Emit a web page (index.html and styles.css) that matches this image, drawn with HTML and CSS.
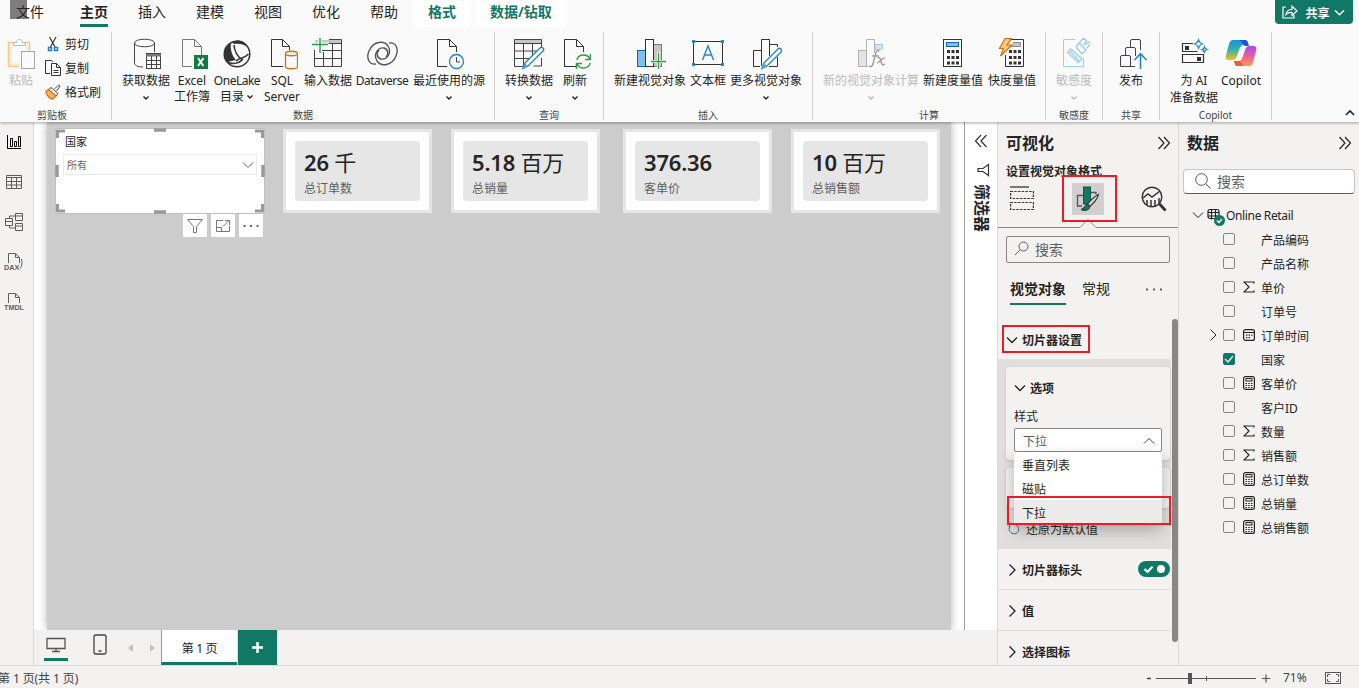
FILE: index.html
```html
<!DOCTYPE html>
<html lang="zh-CN">
<head>
    <title>Power BI 报表</title>
    <meta charset="utf-8">
    <link rel="stylesheet" href="styles.css">
</head>
<body>
    <!-- 公用图标 -->
    <svg class="defs" width="0" height="0">
        <symbol id="i-down" viewBox="0 0 12 12"><path d="M1 3.5l5 5 5-5" fill="none" stroke="currentColor"/></symbol>
        <symbol id="i-right" viewBox="0 0 12 12"><path d="M3.5 0.5L9 6l-5.500 5.500" fill="none" stroke="currentColor"/></symbol>
        <symbol id="i-caret" viewBox="0 0 8 8"><path d="M1.500 2.500L4 5l2.500-2.500" fill="none" stroke="currentColor" stroke-width="1.400"/></symbol>
        <symbol id="i-collapse" viewBox="0 0 14 14"><path d="M1.500 1l5.500 6-5.500 6M7 1l5.500 6L7 13" fill="none" stroke="currentColor" stroke-width="1.200"/></symbol>
        <symbol id="i-sum" viewBox="0 0 12 12"><path d="M11 2.500V1H1l5 5-5 5h10V9.500" fill="none" stroke="currentColor" stroke-width="1.200"/></symbol>
        <symbol id="i-calc" viewBox="0 0 12 14"><rect x=".6" y=".6" width="10.800" height="12.800" rx="2" fill="none" stroke="currentColor" stroke-width="1.200"/><rect x="3" y="2.600" width="6" height="2.400" fill="none" stroke="currentColor"/><path d="M2.500 7.500h7M2.500 9.500h7M2.500 11.500h7" stroke="currentColor" stroke-width="1.200" stroke-dasharray="1.500 1.200"/></symbol>
        <symbol id="i-cal" viewBox="0 0 12 12"><rect x=".6" y=".6" width="10.800" height="10.800" rx="2" fill="none" stroke="currentColor" stroke-width="1.200"/><path d="M1 3.500h10" stroke="currentColor"/><path d="M3 6.200h6.500M3 8.700h4" stroke="currentColor" stroke-width="1.300" stroke-dasharray="1.400 1.200"/></symbol>
    </svg>

    <div class="ribbon">
        <div class="tabs">
            <span class="tab file">文件</span>
            <span class="tab active">主页</span>
            <span class="tab">插入</span>
            <span class="tab">建模</span>
            <span class="tab">视图</span>
            <span class="tab">优化</span>
            <span class="tab">帮助</span>
            <span class="tab context">格式</span>
            <span class="tab context">数据/钻取</span>
            <button class="share">
                <svg width="16" height="14" viewBox="0 0 16 14"><path d="M4 2H1v11h11v-3M4 9.500C4.500 6 7 4.500 10 4.500V1l5 5-5 4.500V7.500C7.500 7.300 5.500 8 4 9.500z" fill="none" stroke="#fff" stroke-width="1.200"/></svg>
                共享
                <svg width="11" height="11"><use href="#i-down" stroke-width="1.500"/></svg>
            </button>
        </div>

        <div class="groups">
            <!-- 剪贴板 -->
            <div class="group clipboard">
                <div class="items">
                    <div class="btn w-28 disabled">
                        <svg width="32" height="32" viewBox="0 0 32 32"><path d="M8 4.500H3.500v24h11M24.500 13V4.500H20" fill="none" stroke="#f3c88f" stroke-width="1.500"/><path d="M5.500 7v19.500h9M22.500 7v5" fill="none" stroke="#fbe6cc" stroke-width="2.500"/><path d="M8.500 7.500V4.500h3c0-4 6-4 6 0h3v3z" fill="#fafafa" stroke="#b9b9b9"/><rect x="16.500" y="13.500" width="13" height="17" fill="#fafafa" stroke="#a5a5a5"/></svg>
                        <span>粘贴</span>
                    </div>
                    <div class="small-btns">
                        <div class="small-btn"><svg width="16" height="16" viewBox="0 0 16 16"><path d="M4.500 1l5.500 10M11 1L5.500 11" fill="none" stroke="#333" stroke-width="1.200"/><rect x="3.500" y="11.500" width="3" height="3" fill="none" stroke="#1e7fc4" stroke-width="1.500"/><rect x="9.500" y="11.500" width="3" height="3" fill="none" stroke="#1e7fc4" stroke-width="1.500"/></svg>剪切</div>
                        <div class="small-btn"><svg width="16" height="16" viewBox="0 0 16 16"><path d="M5 13.500H.5V.5h6l1.500 1.500" fill="none" stroke="#333"/><path d="M6.500 3.500h5l4 4v8h-9zM11.500 3.500v4h4M8.500 10.500h5M8.500 12.500h5" fill="#fafafa" stroke="#333"/></svg>复制</div>
                        <div class="small-btn"><svg width="16" height="16" viewBox="0 0 16 16"><path d="M9.500 5L13 1.500c1-1 2.500.3 1.500 1.500L11.500 7" fill="#fff" stroke="#444"/><path d="M6 3.500l7 6-2 2.500-7.500-6.500z" fill="#fff" stroke="#444"/><path d="M3.500 5.500L.8 7.500c1 4 3.500 7 7 7.700L11 12z" fill="#f7b267" stroke="#d5700f" stroke-width="1.200"/></svg>格式刷</div>
                    </div>
                </div>
                <div class="group-name">剪贴板</div>
            </div>

            <!-- 数据 -->
            <div class="group data">
                <div class="items">
                    <div class="btn w-56">
                        <svg width="32" height="32" viewBox="0 0 32 32"><path d="M13 29C7 29 4.500 27 4.500 25V5c0-5 20-5 20 0v9M4.500 5c0 5 20 5 20 0" fill="none" stroke="#444"/><rect x="16.500" y="15.500" width="14" height="15" fill="#fafafa" stroke="#444"/><path d="M16 16h15v2.500H16z" fill="#777"/><path d="M16 22.500h15M16 26.500h15M21.500 18v13M26.500 18v13" stroke="#444"/></svg>
                        <span>获取数据</span><svg class="caret"><use href="#i-caret"/></svg>
                    </div>
                    <div class="btn w-36">
                        <svg width="32" height="32" viewBox="0 0 32 32"><path d="M16 28.500H6.500v-27h12l7 7V17M18.500 1.500v7h7" fill="none" stroke="#777"/><rect x="18" y="17" width="14" height="14" fill="#107c41"/><path d="M22 20l5.500 8M27.500 20L22 28" stroke="#fff" stroke-width="2"/></svg>
                        <span>Excel<br>工作簿</span>
                    </div>
                    <div class="btn w-54">
                        <svg width="32" height="32" viewBox="0 0 32 32"><circle cx="16" cy="16" r="12.800" fill="none" stroke="#333" stroke-width="1.500"/><path d="M10 5C3 9 1 18 6 24l9-2C11 18 9 11 10 5z" fill="#333"/><path d="M11 4c7-3.500 13-1 16 5-4-2.500-8-4-14-3z" fill="#333"/><path d="M13 7c0 6 4 12 8 14.500M15 23c4-4 8-2 12.500-7M6 23c4 4 12 3 16-2" fill="none" stroke="#333" stroke-width="1.500"/></svg>
                        <span><em>OneLake</em><br>目录<svg class="caret-inline"><use href="#i-caret"/></svg></span>
                    </div>
                    <div class="btn w-36">
                        <svg width="32" height="32" viewBox="0 0 32 32"><path d="M17 28.500H5.500v-27h11l7 7V12M16.500 1.500v7h7" fill="none" stroke="#333"/><path d="M19.500 15.500v13c0 3 12 3 12 0v-13c0-3-12-3-12 0c0 3 12 3 12 0" fill="#fafafa" stroke="#d5700f" stroke-width="1.300"/></svg>
                        <span>SQL<br>Server</span>
                    </div>
                    <div class="btn w-56">
                        <svg width="32" height="32" viewBox="0 0 32 32"><rect x="3" y="2" width="27" height="4" fill="#c8c6c4"/><path d="M17 1.500h12.500v27h-27V12M2.500 20.500h27M10 12.500h19.500M11.500 14v14M20.500 6v22M17 5.500h12.500" fill="none" stroke="#444"/><path d="M8 -1v17M0 6.500h16" stroke="#fafafa" stroke-width="4"/><path d="M8 0v15M0 6.500h16" stroke="#2e9c4a" stroke-width="1.400"/></svg>
                        <span>输入数据</span>
                    </div>
                    <div class="btn w-52">
                        <svg width="32" height="32" viewBox="0 0 32 32"><g fill="none" stroke="#555" stroke-width="1.400"><path id="swirl" d="M10 26C3 27 0 20 3 13 7 3 18 2 22 8c4 7-1 14-7 13-4-1-5-6-2-9"/><path d="M10 26C3 27 0 20 3 13 7 3 18 2 22 8c4 7-1 14-7 13-4-1-5-6-2-9" transform="rotate(180 16.500 15.500)"/></g></svg>
                        <span><em>Dataverse</em></span>
                    </div>
                    <div class="btn w-82">
                        <svg width="32" height="32" viewBox="0 0 32 32"><path d="M14 28.500H4.500v-27h12l7 7V14M16.500 1.500v7h7" fill="none" stroke="#333"/><circle cx="23.500" cy="23.500" r="7" fill="#fafafa" stroke="#1e7fc4" stroke-width="1.300"/><path d="M23.500 19v5H27" fill="none" stroke="#444"/></svg>
                        <span>最近使用的源</span><svg class="caret"><use href="#i-caret"/></svg>
                    </div>
                </div>
                <div class="group-name">数据</div>
            </div>

            <!-- 查询 -->
            <div class="group query">
                <div class="items">
                    <div class="btn w-56">
                        <svg width="32" height="32" viewBox="0 0 32 32"><rect x="2" y="2" width="27" height="4" fill="#c8c6c4"/><path d="M12 28.500H1.500v-27h27v8M1.500 5.500h27M1.500 13h24M1.500 20.500h16M10.500 6v22M19.500 6v13M28.500 20v8h-8" fill="none" stroke="#444"/><path d="M12 25L27 10c2-2 5 1 3 3L15 28l-5 2.500z" fill="#fff" stroke="#1e7fc4" stroke-width="1.300"/><path d="M12 25l3 3-5 2.500z" fill="#59a9e2"/></svg>
                        <span>转换数据</span><svg class="caret"><use href="#i-caret"/></svg>
                    </div>
                    <div class="btn w-36">
                        <svg width="32" height="32" viewBox="0 0 32 32"><path d="M17 28.500H5.500v-27h12l7 7V14M17.500 1.500v7h7" fill="none" stroke="#333"/><path d="M18 22c1-6 10-7 13-1M31.500 16v5.500H26M31 25c-1 6-10 7-13 1M17.500 31v-5.500H23" fill="none" stroke="#2e9c4a" stroke-width="1.500"/></svg>
                        <span>刷新</span><svg class="caret"><use href="#i-caret"/></svg>
                    </div>
                </div>
                <div class="group-name">查询</div>
            </div>

            <!-- 插入 -->
            <div class="group insert">
                <div class="items">
                    <div class="btn w-80">
                        <svg width="32" height="32" viewBox="0 0 32 32"><rect x="3.500" y="12.500" width="8" height="16" fill="#83beec" stroke="#1560b0"/><rect x="19.500" y="6.500" width="8" height="22" fill="#c8c6c4" stroke="#777"/><rect x="11.500" y="1.500" width="8" height="27" fill="#fff" stroke="#333"/><path d="M24.500 14v17M16 23.500h16" stroke="#fafafa" stroke-width="3"/><path d="M24.500 15v16M17 23.500h15" stroke="#2e9c4a" stroke-width="1.300"/></svg>
                        <span>新建视觉对象</span>
                    </div>
                    <div class="btn w-36">
                        <svg width="32" height="32" viewBox="0 0 32 32"><rect x="1.500" y="3.500" width="29" height="23" fill="none" stroke="#333"/><path d="M0 2h3v3H0zM29 2h3v3h-3zM0 25h3v3H0zM29 25h3v3h-3z" fill="#1e88d0"/><path d="M10.500 22L16 8l5.500 14M12.500 17h7" fill="none" stroke="#1e88d0" stroke-width="1.400"/></svg>
                        <span>文本框</span>
                    </div>
                    <div class="btn w-80">
                        <svg width="32" height="32" viewBox="0 0 32 32"><path d="M10 28.500H3.500v-16h8V28M11.500 24V1.500h8V18M19.500 6.500h8V9M27.500 19v9.500H19" fill="none" stroke="#333"/><path d="M14 25L28 11c2-2 5 1 3 3L17 28l-5 2.500z" fill="#fff" stroke="#1e7fc4" stroke-width="1.300"/><path d="M14 25l3 3-5 2.500z" fill="#59a9e2"/></svg>
                        <span>更多视觉对象</span><svg class="caret"><use href="#i-caret"/></svg>
                    </div>
                </div>
                <div class="group-name">插入</div>
            </div>

            <!-- 计算 -->
            <div class="group calc">
                <div class="items">
                    <div class="btn w-104 disabled">
                        <svg width="32" height="32" viewBox="0 0 32 32"><rect x="3.500" y="12.500" width="8" height="16" fill="#e4e4e4" stroke="#b0b0b0"/><path d="M20 12V6.500h7.500V11z" fill="#cfe5f6" stroke="#a0c8e6"/><path d="M13 28.500h-1.500v-27h8V15" fill="#fafafa" stroke="#b0b0b0"/><path d="M14 28c3 2 4-1 5-6l1.500-6c.5-3 2-4 4-3M17 18h7M22.500 20c3-2 3 2 4 5s2 2 3.500 1M30 20c-2-1-6 5-8 5" fill="none" stroke="#a0a0a0" stroke-width="1.500"/></svg>
                        <span>新的视觉对象计算</span><svg class="caret"><use href="#i-caret"/></svg>
                    </div>
                    <div class="btn w-60">
                        <svg width="32" height="32" viewBox="0 0 32 32"><rect x="6.500" y="1.500" width="18" height="27" fill="#fff" stroke="#333"/><rect x="9.500" y="4.500" width="12" height="4" fill="#83beec" stroke="#1560b0"/><path d="M10 13.500h12M10 19.500h12M10 25h12" stroke="#333" stroke-width="3" stroke-dasharray="3 1.500"/></svg>
                        <span>新建度量值</span>
                    </div>
                    <div class="btn w-58">
                        <svg width="32" height="32" viewBox="0 0 32 32"><path d="M14 1.500h13.500v27h-18V17" fill="none" stroke="#333"/><path d="M17 4.500h7.500v4H15" fill="#c8c6c4" stroke="#888"/><path d="M13 13.500h12M13 19.500h12M13 25h12" stroke="#333" stroke-width="3" stroke-dasharray="3 1.500"/><path d="M9 .5h6.500L11 7h5L4.500 18l3-7.500H3.500z" fill="#fbc883" stroke="#d5700f" stroke-width="1.200"/></svg>
                        <span>快度量值</span>
                    </div>
                </div>
                <div class="group-name">计算</div>
            </div>

            <!-- 敏感度 -->
            <div class="group single">
                <div class="items">
                    <div class="btn w-56 disabled">
                        <svg width="32" height="32" viewBox="0 0 32 32"><path d="M17 1.500H5.500v27h20V20" fill="none" stroke="#a3cfe8"/><path d="M9.500 14.500l3.500-3.500 11 10-3.500 3.500zM12 13l9 9.500M18.500 10l6 6M18 9l3-4 7 7-4 4zM21.500 5l4-5 3 3-3 4M28 6l3-2 1.500 2-3.500 4" fill="none" stroke="#a3cfe8" stroke-width="1.500"/></svg>
                        <span>敏感度</span><svg class="caret"><use href="#i-caret"/></svg>
                    </div>
                </div>
                <div class="group-name">敏感度</div>
            </div>

            <!-- 共享 -->
            <div class="group single">
                <div class="items">
                    <div class="btn w-56">
                        <svg width="32" height="32" viewBox="0 0 32 32"><path d="M20 28.500H5.500V19a1.500 1.500 0 0 1 1.500-1.500h7a1.500 1.500 0 0 1 1.500 1.500v9.500M10.500 17v-6A1.500 1.500 0 0 1 12 9.500h7a1.500 1.500 0 0 1 1.500 1.500V18M15.500 9V3A1.500 1.500 0 0 1 17 1.500h7A1.500 1.500 0 0 1 25.500 3v9" fill="none" stroke="#444"/><path d="M25.500 31V16M19.500 22l6-6.500 6 6.500" fill="none" stroke="#1e7fc4" stroke-width="1.500"/></svg>
                        <span>发布</span>
                    </div>
                </div>
                <div class="group-name">共享</div>
            </div>

            <!-- Copilot -->
            <div class="group copilot">
                <div class="items">
                    <div class="btn w-56">
                        <svg width="32" height="32" viewBox="0 0 32 32"><path d="M15 5.500H4.500v8h15M4.500 16.500h21v8h-21zM25.500 14v-1" fill="none" stroke="#333" stroke-width="1.200"/><path d="M7 8h4v4H7zM19 19h4v4h-4z" fill="#333"/><path d="M20.500 2c.7 2.500 1.500 3.300 4 4-2.500.7-3.300 1.500-4 4-.7-2.500-1.500-3.300-4-4 2.500-.7 3.300-1.500 4-4zM26.500 9c.4 1.500 1 2.100 2.500 2.500-1.500.4-2.100 1-2.500 2.500-.4-1.500-1-2.100-2.500-2.500 1.500-.4 2.100-1 2.500-2.500z" fill="#fff" stroke="#1e88d0" stroke-width="1.200"/></svg>
                        <span class="tall">为 AI<br>准备数据</span>
                    </div>
                    <div class="btn w-38">
                        <svg width="32" height="32" viewBox="0 0 32 32">
                            <defs>
                                <linearGradient id="g1" x1="0" y1="0" x2="0" y2="1"><stop offset="0" stop-color="#1a8fe8"/><stop offset=".5" stop-color="#35b5a0"/><stop offset="1" stop-color="#f1c21c"/></linearGradient>
                                <linearGradient id="g2" x1="0" y1="0" x2="0" y2="1"><stop offset="0" stop-color="#a44af0"/><stop offset=".5" stop-color="#ee5c9a"/><stop offset="1" stop-color="#fb9a4b"/></linearGradient>
                            </defs>
                            <path d="M8 2h11c3 0 3 2 4 5h-4c-3 0-4 2-5 5l-2 6c-1 3-2 4-5 4H4c-3 0-4-2-3-5L4 6c1-3 2-4 4-4z" fill="url(#g1)"/>
                            <path d="M24 28H13c-3 0-3-2-4-5h4c3 0 4-2 5-5l2-6c1-3 2-4 5-4h3c3 0 4 2 3 5l-3 11c-1 3-2 4-4 4z" fill="url(#g2)"/>
                            <path d="M14 2h6c3 0 3 3 4 6h-4c-2-1-3-5-6-6z" fill="#2151d8"/>
                            <path d="M9 23h5c2 0 3 3 4 5h-5c-3 0-3-2-4-5z" fill="#ee5a35"/>
                        </svg>
                        <span>Copilot</span>
                    </div>
                </div>
                <div class="group-name">Copilot</div>
            </div>
            <svg class="ribbon-fold" width="12" height="12" viewBox="0 0 12 12"><path d="M2 8l4-4 4 4" fill="none" stroke="#222" stroke-width="1.600"/></svg>
        </div>
    </div>

    <div class="workspace">
        <div class="views">
            <svg width="16" height="16" viewBox="0 0 16 16"><path d="M1.500 1v13.500H15M4.500 12.500v-8h2v8zM8.500 12.500v-5h2v5zM12.500 12.500v-10h2v10z" fill="none" stroke="#000"/></svg>
            <svg width="16" height="16" viewBox="0 0 16 16"><path d="M.5 1.500h15v13H.5zM.5 3.500h15M.5 7.500h15M.5 11h15M5.500 3.500v11M10.500 3.500v11" fill="none" stroke="#605e5c"/></svg>
            <svg width="18" height="18" viewBox="0 0 18 18"><path d="M.5 5.500h7v7h-7zM.5 8.500h7M10.500.5h7v7h-7zM10.500 3h7M10.500 10.500h7v7h-7zM10.500 13h7M4.500 5V3h6M4.500 13v2h6" fill="none" stroke="#605e5c"/></svg>
            <svg width="20" height="18" viewBox="0 0 20 18"><path d="M4.500 10V.5h7l4 4V10M11.500.5v4h4M17.500 6c1 3 .5 7-1.500 9.500" fill="none" stroke="#605e5c"/><text x="0" y="16.500" class="icon-text">DAX</text></svg>
            <svg width="20" height="18" viewBox="0 0 20 18"><path d="M4.500 10V.5h7l4 4V10M11.500.5v4h4" fill="none" stroke="#605e5c"/><text x="0" y="16.500" class="icon-text">TMDL</text></svg>
        </div>

        <div class="center">
            <div class="report">
                <div class="stage">
                    <div class="canvas">
                        <div class="slicer">
                            <div class="slicer-title">国家</div>
                            <div class="slicer-select">所有<svg width="12" height="12"><use href="#i-down"/></svg></div>
                            <svg class="handles" width="210" height="86" viewBox="0 0 210 86"><path d="M1 .5h208M1 85.500h208M.5 1v84M209.500 1v84" stroke="#c0c0c0"/><path d="M10 3H2.500v7M200 3h7.500v7M10 83H2.500v-7M200 83h7.500v-7" fill="none" stroke="#999" stroke-width="3"/><path d="M99 2h12M99 84h12M2 37v12M208 37v12" stroke="#999" stroke-width="3.500"/></svg>
                            <div class="slicer-tools">
                                <span><svg width="18" height="16" viewBox="0 0 18 16"><path d="M1.500 1.500h15l-6 7v6h-3v-6z" fill="none" stroke="#777"/></svg></span>
                                <span><svg width="16" height="14" viewBox="0 0 16 14"><path d="M8 1.500H1.500v11h13V7M1.500 8.500h5v4M8 7.500l6-6M10 1.500h4.500V6" fill="none" stroke="#777"/></svg></span>
                                <span><svg width="16" height="4" viewBox="0 0 16 4"><path d="M.5 1h2v2h-2zM7 1h2v2H7zM13.500 1h2v2h-2z" fill="#666"/></svg></span>
                            </div>
                        </div>
                        <div class="card"><div class="card-body"><div class="card-value">26 <span>千</span></div><div class="card-label">总订单数</div></div></div>
                        <div class="card"><div class="card-body"><div class="card-value">5.18 <span>百万</span></div><div class="card-label">总销量</div></div></div>
                        <div class="card wide-gap"><div class="card-body"><div class="card-value">376.36</div><div class="card-label">客单价</div></div></div>
                        <div class="card"><div class="card-body"><div class="card-value">10 <span>百万</span></div><div class="card-label">总销售额</div></div></div>
                    </div>
                </div>
                <div class="filters">
                    <svg width="14" height="14" viewBox="0 0 14 14"><path d="M7 1L1.500 7 7 13M12.500 1L7 7l5.500 6" fill="none" stroke="#333" stroke-width="1.200"/></svg>
                    <svg class="funnel" width="14" height="14" viewBox="0 0 14 14"><path d="M12.500 1.500v11L7 8.500H2v-3h5z" fill="none" stroke="#333" stroke-width="1.200"/></svg>
                    <span>筛选器</span>
                </div>
            </div>
            <div class="pages">
                <div class="device on"><svg width="20" height="16" viewBox="0 0 20 16"><path d="M1 1.500h18v10H1zM10 12v2M6 14.500h8" fill="none" stroke="#555" stroke-width="1.300"/></svg></div>
                <div class="device"><svg width="14" height="21" viewBox="0 0 14 21"><rect x="1" y="1" width="12" height="19" rx="1.500" fill="none" stroke="#444" stroke-width="1.300"/><path d="M5.500 17h3" stroke="#444" stroke-width="1.500"/></svg></div>
                <svg class="arrow" width="5" height="8" viewBox="0 0 5 8"><path d="M5 0v8L0 4z" fill="#c4c2c0"/></svg>
                <svg class="arrow next" width="5" height="8" viewBox="0 0 5 8"><path d="M0 0v8l5-4z" fill="#c4c2c0"/></svg>
                <div class="page-tab">第 1 页</div>
                <div class="page-add"><svg width="11" height="11" viewBox="0 0 11 11"><path d="M5.500 0v11M0 5.500h11" stroke="#fff" stroke-width="2.500"/></svg></div>
            </div>
        </div>

        <!-- 可视化窗格 -->
        <div class="pane viz">
            <div class="pane-head">可视化<svg width="14" height="14"><use href="#i-collapse"/></svg></div>
            <div class="pane-sub">设置视觉对象格式</div>
            <div class="modes">
                <svg width="24" height="26" viewBox="0 0 24 26"><path d="M0 1h19" stroke="#333" stroke-width="1.300"/><path d="M.6 5.500h22.800v7H.6zM.6 16.500h22.800v7H.6z" fill="none" stroke="#333" stroke-width="1.200" stroke-dasharray="2.500 1.200"/></svg>
                <div class="mode-on"><svg width="24" height="26" viewBox="0 0 24 26"><path d="M6 20H1.500V9.500H7M15 6.500h5v2" fill="none" stroke="#555" stroke-width="1.300"/><rect x="7.500" y="1" width="7" height="17" fill="#117865" stroke="#0b5a4b"/><path d="M22.500 8.500c-4 2-9 7-11 10l2 2c3-2 8-7 9-12z" fill="#d2d0ce" stroke="#333" stroke-width="1.200"/><path d="M11.500 18.500c-3 0-2.500 4-6.500 5 4 2 8.500.5 9-3z" fill="#117865" stroke="#222"/></svg></div>
                <svg width="26" height="26" viewBox="0 0 26 26"><circle cx="11" cy="11" r="9.800" fill="none" stroke="#333" stroke-width="1.400"/><path d="M2 12l5-4 4 3 8-6M6 19v-5M10 21v-7M14 20v-6M18 18v-6" fill="none" stroke="#333" stroke-width="1.500"/><path d="M18.500 18l6 6.500" stroke="#333" stroke-width="2.800"/></svg>
                <div class="mark mark-mode"></div>
            </div>
            <svg class="notch" width="180" height="10" viewBox="0 0 180 10"><path d="M0 8.500h82l8-8 8 8h82" fill="none" stroke="#8a8886"/></svg>
            <div class="search-box"><svg width="15" height="15" viewBox="0 0 15 15"><circle cx="9.500" cy="5.500" r="4.500" fill="none" stroke="#605e5c"/><path d="M6.200 8.800L1 14" stroke="#605e5c"/></svg>搜索</div>
            <div class="subtabs"><b>视觉对象</b><span>常规</span><svg width="16" height="3" viewBox="0 0 16 3"><path d="M0 .5h2v2H0zM7 .5h2v2H7zM14 .5h2v2h-2z" fill="#605e5c"/></svg></div>
            <div class="props">
                <div class="prop-head first"><svg width="12" height="12"><use href="#i-down" stroke-width="1.300"/></svg>切片器设置<div class="mark mark-section"></div></div>
                <div class="prop-body">
                    <div class="prop-card">
                        <div class="prop-title"><svg width="12" height="12"><use href="#i-down" stroke-width="1.300"/></svg>选项</div>
                        <div class="prop-label">样式</div>
                        <div class="select">下拉<svg width="12" height="12" viewBox="0 0 12 12"><path d="M1 8.500l5-5 5 5" fill="none" stroke="#444"/></svg>
                            <div class="options">
                                <div>垂直列表</div>
                                <div>磁贴</div>
                                <div class="chosen">下拉</div>
                            </div>
                            <div class="mark mark-option"></div>
                        </div>
                    </div>
                    <div class="prop-card blank"></div>
                    <div class="reset"><svg width="12" height="12" viewBox="0 0 12 12"><path d="M1.500 1.500v3.500M2 3C-.5 7 3 11 6.500 10.800 11 10.500 12.500 4.500 8 1.800" fill="none" stroke="#1d7d76"/></svg>还原为默认值</div>
                </div>
                <div class="prop-head"><svg width="12" height="12"><use href="#i-right" stroke-width="1.300"/></svg>切片器标头
                    <svg class="toggle" width="32" height="16" viewBox="0 0 32 16"><rect width="32" height="16" rx="8" fill="#117865"/><path d="M6.500 8l3 3 5-5.500" fill="none" stroke="#fff" stroke-width="2.200"/><circle cx="23" cy="8" r="4" fill="#fff"/></svg>
                </div>
                <div class="prop-head"><svg width="12" height="12"><use href="#i-right" stroke-width="1.300"/></svg>值</div>
                <div class="prop-head last"><svg width="12" height="12"><use href="#i-right" stroke-width="1.300"/></svg>选择图标</div>
                <div class="scroll"></div>
            </div>
        </div>

        <!-- 数据窗格 -->
        <div class="pane fields">
            <div class="pane-head">数据<svg width="14" height="14"><use href="#i-collapse"/></svg></div>
            <div class="search-box"><svg width="16" height="16" viewBox="0 0 16 16"><circle cx="6.500" cy="6.500" r="5.800" fill="none" stroke="#555"/><path d="M10.800 10.800L15.500 15.500" stroke="#555"/></svg>搜索</div>
            <div class="table-row"><svg width="12" height="12"><use href="#i-down"/></svg><svg width="18" height="18" viewBox="0 0 18 18"><path d="M3 1.500h7a2 2 0 0 1 2 2v7H3a2 2 0 0 1-2-2v-5a2 2 0 0 1 2-2zM1 4.500h11M1 8h11M4.500 1.500v10M8.500 1.500v10" fill="none" stroke="#222" stroke-width="1.200"/><circle cx="12.500" cy="12.500" r="5.500" fill="#117865"/><path d="M10 12.500l2 2 3-3.500" fill="none" stroke="#fff" stroke-width="1.500"/></svg>Online Retail</div>
            <div class="field"><i></i><b class="check"></b><i></i>产品编码</div>
            <div class="field"><i></i><b class="check"></b><i></i>产品名称</div>
            <div class="field"><i></i><b class="check"></b><svg class="ico"><use href="#i-sum"/></svg>单价</div>
            <div class="field"><i></i><b class="check"></b><i></i>订单号</div>
            <div class="field"><svg class="ico"><use href="#i-right"/></svg><b class="check"></b><svg class="ico"><use href="#i-cal"/></svg>订单时间</div>
            <div class="field"><i></i><b class="check checked"><svg width="10" height="10" viewBox="0 0 10 10"><path d="M1 5l3 3 5-6" fill="none" stroke="#fff" stroke-width="1.200"/></svg></b><i></i>国家</div>
            <div class="field"><i></i><b class="check"></b><svg class="ico calc-ico"><use href="#i-calc"/></svg>客单价</div>
            <div class="field"><i></i><b class="check"></b><i></i>客户ID</div>
            <div class="field"><i></i><b class="check"></b><svg class="ico"><use href="#i-sum"/></svg>数量</div>
            <div class="field"><i></i><b class="check"></b><svg class="ico"><use href="#i-sum"/></svg>销售额</div>
            <div class="field"><i></i><b class="check"></b><svg class="ico calc-ico"><use href="#i-calc"/></svg>总订单数</div>
            <div class="field"><i></i><b class="check"></b><svg class="ico calc-ico"><use href="#i-calc"/></svg>总销量</div>
            <div class="field"><i></i><b class="check"></b><svg class="ico calc-ico"><use href="#i-calc"/></svg>总销售额</div>
        </div>
    </div>

    <div class="status">
        <span class="page-info">第 1 页(共 1 页)</span>
        <svg width="125" height="14" viewBox="0 0 125 14"><path d="M2 7.500h4" stroke="#444" stroke-width="1.500"/><path d="M11 7.500h100M61.500 5v5" stroke="#555"/><path d="M43 2h4v11h-4z" fill="#555"/><path d="M117 7.500h8M121 3.500v8" stroke="#555" stroke-width="1.200"/></svg>
        <span class="zoom-value">71%</span>
        <svg class="fit" width="16" height="12" viewBox="0 0 16 12"><rect x=".5" y=".5" width="15" height="11" fill="none" stroke="#555"/><path d="M2.500 5V2.500H5M11 2.500h2.500V5M2.500 7v2.500H5M11 9.500h2.500V7" fill="none" stroke="#6a4f78"/></svg>
    </div>
</body>
</html>
```
FILE: styles.css
```css
* {
    box-sizing: border-box;
}
body {
    margin: 0;
    height: 688px;
    display: flex;
    flex-direction: column;
    overflow: hidden;
    font-family: "Noto Sans", "Noto Sans CJK SC", sans-serif;
    font-size: 12px;
    color: #252423;
    background-color: #f3f2f1;
}
svg {
    flex: none;
}
em {
    font-style: normal;
    letter-spacing: -0.5px;
}
.defs {
    position: absolute;
}

/* 功能区 */
.ribbon {
    flex: none;
    height: 122px;
    background-color: #fafafa;
    box-shadow: 0 1px 3px rgba(0,0,0,0.35);
    position: relative;
    z-index: 2;
}
.tabs {
    display: flex;
    height: 27px;
    padding-left: 1px;
}
.tab {
    padding: 0 15px;
    height: 27px;
    line-height: 24px;
    font-size: 14px;
    white-space: nowrap;
}
.file {
    width: 64px;
    background: linear-gradient(#7d7d7d, #7d7d7d) 9px 0 / 17px 19px no-repeat;
}
.active {
    font-weight: bold;
    background: linear-gradient(#117865, #117865) 15px 24px / 28px 3px no-repeat;
}
.context {
    color: #117865;
    font-weight: bold;
    background-color: #fff;
    margin-right: 4px;
}
.share {
    display: flex;
    align-items: center;
    justify-content: space-between;
    width: 78px;
    height: 24px;
    margin: 0 6px 0 auto;
    padding: 0 8px 0 7px;
    border: none;
    border-radius: 0 0 4px 4px;
    background-color: #117865;
    color: white;
    font: bold 12px "Noto Sans CJK SC", sans-serif;
}
.share svg:first-child {
    margin-right: 3px;
}
.groups {
    display: flex;
    height: 95px;
    padding-top: 5px;
}
.group {
    display: flex;
    flex-direction: column;
    height: 88px;
    border-right: 1px solid #d2d0ce;
}
.clipboard { width: 112px; }
.data { width: 383px; }
.query { width: 109px; }
.insert { width: 209px; }
.calc { width: 233px; }
.single { width: 57px; }
.copilot { width: 112px; }
.items {
    display: flex;
    flex: none;
    height: 76px;
    padding: 6px 0 0 6px;
}
.clipboard .items {
    padding-left: 7px;
}
.single .items {
    padding-left: 0;
}
.group-name {
    font-size: 10px;
    line-height: 14px;
    text-align: center;
    color: #444;
}
.clipboard .group-name {
    padding-right: 7px;
}
.btn {
    display: flex;
    flex-direction: column;
    align-items: center;
    text-align: center;
    white-space: nowrap;
    line-height: 16px;
}
.btn span {
    margin-top: 3px;
}
.btn .tall {
    margin-top: 2px;
    line-height: 17px;
}
.w-28 { width: 28px; }
.w-36 { width: 36px; }
.w-38 { width: 38px; }
.w-52 { width: 52px; }
.w-54 { width: 54px; }
.w-56 { width: 56px; }
.w-58 { width: 58px; }
.w-60 { width: 60px; }
.w-80 { width: 80px; }
.w-82 { width: 82px; }
.w-104 { width: 104px; }
.disabled {
    color: #bdbbb9;
}
.caret {
    width: 8px;
    height: 8px;
    margin-top: 5px;
}
.caret-inline {
    width: 8px;
    height: 8px;
    margin-left: 2px;
}
.small-btns {
    display: flex;
    flex-direction: column;
    margin: -6px 0 0 10px;
}
.small-btn {
    display: flex;
    align-items: center;
    gap: 4px;
    height: 24px;
    white-space: nowrap;
}
.ribbon-fold {
    margin: 75px 3px 0 auto;
}

/* 工作区 */
.workspace {
    display: flex;
    flex: none;
    height: 544px;
    border-bottom: 1px solid #dddbda;
}
.views {
    display: flex;
    flex-direction: column;
    align-items: center;
    width: 34px;
    padding: 12px 6px 0 0;
    border-right: 1px solid #dddbda;
}
.views svg {
    margin-bottom: 24px;
}
.views svg:nth-child(n+3) {
    margin-bottom: 22px;
}
.views svg:nth-child(2) {
    margin-bottom: 23px;
}
.icon-text {
    font: bold 7.2px "Liberation Sans", sans-serif;
    fill: #605e5c;
}
.center {
    display: flex;
    flex-direction: column;
    width: 963px;
}
.report {
    display: flex;
    height: 508px;
}
.stage {
    width: 930px;
    padding: 0 13px;
    background-color: #fff;
    overflow: hidden;
}
.canvas {
    display: flex;
    gap: 19px;
    height: 508px;
    padding: 7px 0 0 9px;
    background-color: #ccc;
    box-shadow: 0 0 8px rgba(0,0,0,0.3);
}
.slicer {
    position: relative;
    width: 208px;
    height: 84px;
    padding: 4px 7px 0 7px;
    background-color: #fff;
}
.slicer-title {
    padding-left: 2px;
    height: 21px;
    line-height: 18px;
    font-size: 11px;
}
.slicer-select {
    display: flex;
    align-items: center;
    justify-content: space-between;
    height: 21px;
    padding: 0 2px 0 3px;
    border: 1px solid #eaeaea;
    font-size: 10px;
    color: #666;
}
.handles {
    position: absolute;
    left: -1px;
    top: -1px;
}
.slicer-tools {
    position: absolute;
    top: 85px;
    right: 1px;
    display: flex;
    gap: 4px;
}
.slicer-tools span {
    display: flex;
    align-items: center;
    justify-content: center;
    width: 24px;
    height: 23px;
    background-color: #fff;
}
.card {
    width: 149px;
    height: 84px;
    padding: 9px;
    border: 3px solid #e6e6e6;
    background-color: #fff;
}
.wide-gap {
    margin-left: 4px;
}
.card-body {
    height: 60px;
    padding: 6px 9px;
    border-radius: 4px;
    background-color: #e6e6e6;
}
.card-value {
    font-size: 22px;
    font-weight: 600;
    line-height: 30px;
    letter-spacing: -0.2px;
    white-space: nowrap;
}
.card-value span {
    font-weight: 400;
}
.card-label {
    line-height: 24px;
    color: #605e5c;
}
.filters {
    display: flex;
    flex-direction: column;
    align-items: center;
    width: 33px;
    padding-top: 12px;
    border-left: 1px solid #a19f9d;
    background-color: #fff;
}
.funnel {
    margin: 15px 0 7px 3px;
}
.filters span {
    margin-left: 2px;
    writing-mode: vertical-rl;
    text-orientation: sideways;
    font-size: 16px;
    line-height: 18px;
    font-weight: bold;
}
.pages {
    display: flex;
    height: 35px;
}
.device {
    display: flex;
    justify-content: center;
    width: 24px;
    margin-left: 10px;
    padding-top: 7px;
}
.device + .device {
    margin-left: 20px;
    padding-top: 4px;
    width: 24px;
}
.on {
    border-bottom: 3px solid #117865;
    margin-bottom: 4px;
}
.arrow {
    margin: 14px 0 0 16px;
}
.next {
    margin-left: 17px;
    margin-right: 6px;
}
.page-tab {
    width: 76px;
    line-height: 37px;
    height: 35px;
    text-align: center;
    letter-spacing: -0.3px;
    background-color: #fff;
    border-left: 1px solid #999;
    border-bottom: 3px solid #117865;
}
.page-add {
    display: flex;
    align-items: center;
    justify-content: center;
    width: 40px;
    background-color: #117865;
    border-left: 1px solid #ddd;
}

/* 右侧窗格 */
.pane {
    border-left: 1px solid #dddbda;
}
.viz {
    width: 181px;
    overflow: hidden;
}
.fields {
    width: 181px;
}
.pane-head {
    display: flex;
    align-items: center;
    justify-content: space-between;
    height: 42px;
    padding: 0 7px 2px 8px;
    font-size: 16px;
    font-weight: bold;
}
.pane-head svg {
    margin-top: 2px;
}
.pane-sub {
    height: 16px;
    padding-left: 8px;
    line-height: 16px;
    font-weight: 600;
    white-space: nowrap;
}
.modes {
    position: relative;
    display: flex;
    align-items: center;
    justify-content: space-between;
    height: 39px;
    padding: 3px 11px 4px 12px;
}
.mode-on {
    display: flex;
    align-items: center;
    justify-content: center;
    width: 32px;
    height: 32px;
    background-color: #d2d0ce;
}
.mark {
    position: absolute;
    border: 2px solid #ed1c24;
    z-index: 3;
}
.mark-mode {
    left: 64px;
    top: -5px;
    width: 55px;
    height: 47px;
}
.notch {
    display: block;
}
.search-box {
    display: flex;
    align-items: center;
    gap: 6px;
    height: 27px;
    padding: 0 0 2px 7px;
    border: 1px solid #8a8886;
    border-radius: 2px;
    font-size: 14px;
    color: #605e5c;
}
.viz .search-box {
    margin: 7px 8px 0;
}
.subtabs {
    display: flex;
    align-items: flex-start;
    height: 42px;
    margin-top: 10px;
    padding: 0 16px 0 12px;
    font-size: 14px;
    line-height: 20px;
    white-space: nowrap;
}
.subtabs b {
    height: 32px;
    padding-top: 6px;
    border-bottom: 2px solid #117865;
}
.subtabs span {
    margin: 6px auto 0 16px;
}
.subtabs svg {
    margin-top: 15px;
}
.props {
    position: relative;
    height: 350px;
    padding-right: 7px;
}
.prop-head {
    display: flex;
    align-items: center;
    gap: 4px;
    height: 41px;
    padding: 1px 0 0 8px;
    font-weight: bold;
    border-bottom: 1px solid #dddbda;
    white-space: nowrap;
}
.first {
    position: relative;
    height: 44px;
    padding-top: 6px;
    border-bottom: none;
}
.last {
    height: 34px;
    padding-top: 8px;
    border-bottom: none;
}
.toggle {
    margin: -2px 1px 0 auto;
}
.mark-section {
    left: 4px;
    top: 10px;
    width: 88px;
    height: 28px;
}
.prop-body {
    height: 190px;
    padding: 8px 1px 0 8px;
    background-color: #e1dfdd;
}
.prop-card {
    height: 93px;
    padding: 10px 8px 0;
    border-radius: 4px;
    background-color: #f3f2f1;
    box-shadow: 0 1px 3px rgba(0,0,0,0.12);
}
.blank {
    height: 40px;
    margin-top: 8px;
}
.prop-title {
    display: flex;
    align-items: center;
    gap: 4px;
    height: 22px;
    font-weight: bold;
}
.prop-label {
    height: 29px;
    line-height: 35px;
}
.select {
    position: relative;
    display: flex;
    align-items: center;
    justify-content: space-between;
    height: 24px;
    padding: 2px 6px 0 8px;
    border: 1px solid #8a8886;
    border-radius: 2px;
    background-color: #fff;
    color: #605e5c;
}
.options {
    position: absolute;
    top: 23px;
    left: -1px;
    width: 148px;
    z-index: 2;
    background-color: #fff;
    color: #252423;
    box-shadow: 0 6px 14px rgba(0,0,0,0.25);
}
.options div {
    height: 24px;
    padding-left: 8px;
    line-height: 28px;
}
.options .chosen {
    background-color: #edebe9;
}
.mark-option {
    left: -8px;
    top: 67px;
    width: 164px;
    height: 29px;
}
.reset {
    display: flex;
    align-items: center;
    gap: 6px;
    height: 24px;
    margin-top: 9px;
    padding-left: 2px;
}
.scroll {
    position: absolute;
    right: 0;
    top: 4px;
    width: 6px;
    height: 323px;
    border-radius: 3px;
    background-color: #8a8886;
}

/* 数据字段列表 */
.fields .search-box {
    height: 25px;
    margin: 5px 4px 9px;
    padding-left: 11px;
    background-color: #fff;
    border-color: #c8c6c4;
    border-bottom-color: #605e5c;
    border-radius: 4px;
}
.table-row {
    display: flex;
    align-items: center;
    height: 24px;
    padding-left: 13px;
    letter-spacing: -0.35px;
    white-space: nowrap;
}
.table-row svg + svg {
    margin: 3px 1px 0 3px;
}
.field {
    display: flex;
    align-items: center;
    gap: 8px;
    height: 24px;
    padding: 1px 0 0 28px;
}
.field i,
.ico {
    width: 12px;
    height: 12px;
    margin-bottom: 1px;
}
.field i:first-child,
.field .ico:first-child {
    margin-right: -4px;
}
.field .ico:nth-child(3),
.field i:nth-child(3) {
    margin-right: -2px;
}
.field .calc-ico {
    height: 14px;
}
.check {
    width: 12px;
    height: 12px;
    margin-bottom: 1px;
    border: 1px solid #8a8886;
    border-radius: 2px;
}
.checked {
    display: flex;
    border-color: #117865;
    background-color: #117865;
}

/* 状态栏 */
.status {
    display: flex;
    align-items: center;
    height: 22px;
    padding-top: 1px;
    color: #444;
}
.page-info {
    margin: 0 auto 0 -2px;
    letter-spacing: -0.1px;
}
.zoom-value {
    margin: 0 18px 0 13px;
    width: 24px;
}
.fit {
    margin-right: 18px;
}
```
